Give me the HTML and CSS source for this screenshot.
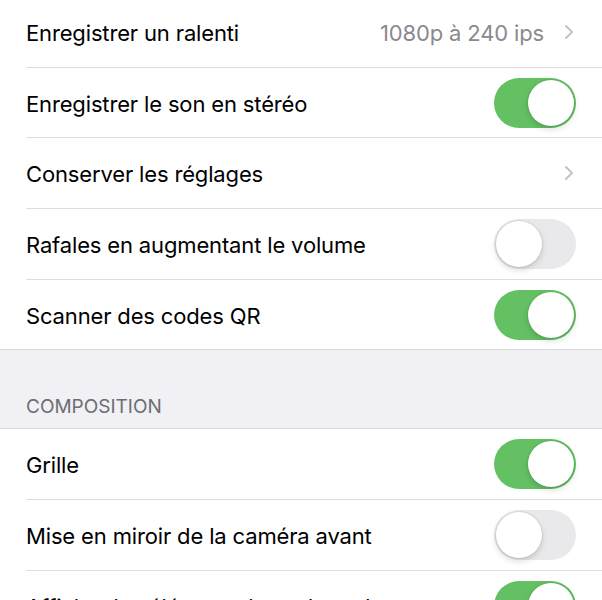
FILE: index.html
```html
<!DOCTYPE html>
<html>

<head>
    <title>Réglages Appareil photo</title>
    <link rel="stylesheet" href="styles.css">
</head>
<body>
    <ul class="group group-top">
        <li class="row">
            <span class="label">Enregistrer un ralenti</span>
            <span class="value">1080p à 240 ips</span>
            <svg class="chevron" width="10" height="16" viewBox="0 0 10 16"><polyline points="2,2 8,8 2,14" fill="none" stroke="#c4c4c7" stroke-width="2" stroke-linecap="round" stroke-linejoin="round"/></svg>
        </li>
        <li class="row">
            <span class="label">Enregistrer le son en stéréo</span>
            <span class="switch on"></span>
        </li>
        <li class="row">
            <span class="label">Conserver les réglages</span>
            <svg class="chevron" width="10" height="16" viewBox="0 0 10 16"><polyline points="2,2 8,8 2,14" fill="none" stroke="#c4c4c7" stroke-width="2" stroke-linecap="round" stroke-linejoin="round"/></svg>
        </li>
        <li class="row">
            <span class="label">Rafales en augmentant le volume</span>
            <span class="switch"></span>
        </li>
        <li class="row">
            <span class="label">Scanner des codes QR</span>
            <span class="switch on"></span>
        </li>
    </ul>

    <div class="section-header">COMPOSITION</div>

    <ul class="group">
        <li class="row">
            <span class="label">Grille</span>
            <span class="switch on"></span>
        </li>
        <li class="row">
            <span class="label">Mise en miroir de la caméra avant</span>
            <span class="switch"></span>
        </li>
        <li class="row">
            <span class="label">Afficher les éléments hors du cadre</span>
            <span class="switch on"></span>
        </li>
    </ul>
</body>
</html>
```

FILE: styles.css
```css
body
{
    margin: 0;
    background-color: white;
    font-family: 'Inter', 'Liberation Sans', sans-serif;
    color: black;
    overflow: hidden;
}

.group
{
    list-style: none;
    margin: 0;
    padding: 0;
    background-color: white;
    border-top: 1px solid rgb(216, 216, 220);
    border-bottom: 1px solid rgb(216, 216, 220);
}

.group-top
{
    margin-top: -3px;
    border-top: none;
}

.row
{
    display: flex;
    align-items: center;
    height: 69.7px;
    margin-left: 26px;
    padding-right: 26px;
    border-bottom: 1px solid rgb(222, 222, 226);
}

.row:last-child
{
    border-bottom: none;
}

.label
{
    flex: 1;
    font-size: 22px;
    letter-spacing: -0.15px;
    padding-top: 2px;
}

.value
{
    font-size: 22px;
    color: rgb(138, 138, 142);
    margin-right: 20px;
    letter-spacing: -0.15px;
    padding-top: 2px;
}

.chevron
{
    margin-right: 2px;
}

.section-header
{
    height: 78px;
    box-sizing: border-box;
    padding: 0 0 10px 26px;
    display: flex;
    align-items: flex-end;
    background-color: rgb(240, 240, 245);
    color: rgb(109, 109, 114);
    font-size: 19px;
}

.switch
{
    position: relative;
    width: 82px;
    height: 50px;
    box-sizing: border-box;
    border-radius: 25px;
    background-color: rgb(233, 233, 235);
}

.switch::after
{
    content: "";
    position: absolute;
    top: 2px;
    left: 2px;
    width: 46px;
    height: 46px;
    border-radius: 50%;
    background-color: white;
    box-shadow: 0 3px 6px rgba(0, 0, 0, 0.15), 0 0 0 1px rgba(0, 0, 0, 0.06);
}

.switch.on
{
    background-color: rgb(99, 193, 99);
}

.switch.on::after
{
    left: 34px;
}
```
